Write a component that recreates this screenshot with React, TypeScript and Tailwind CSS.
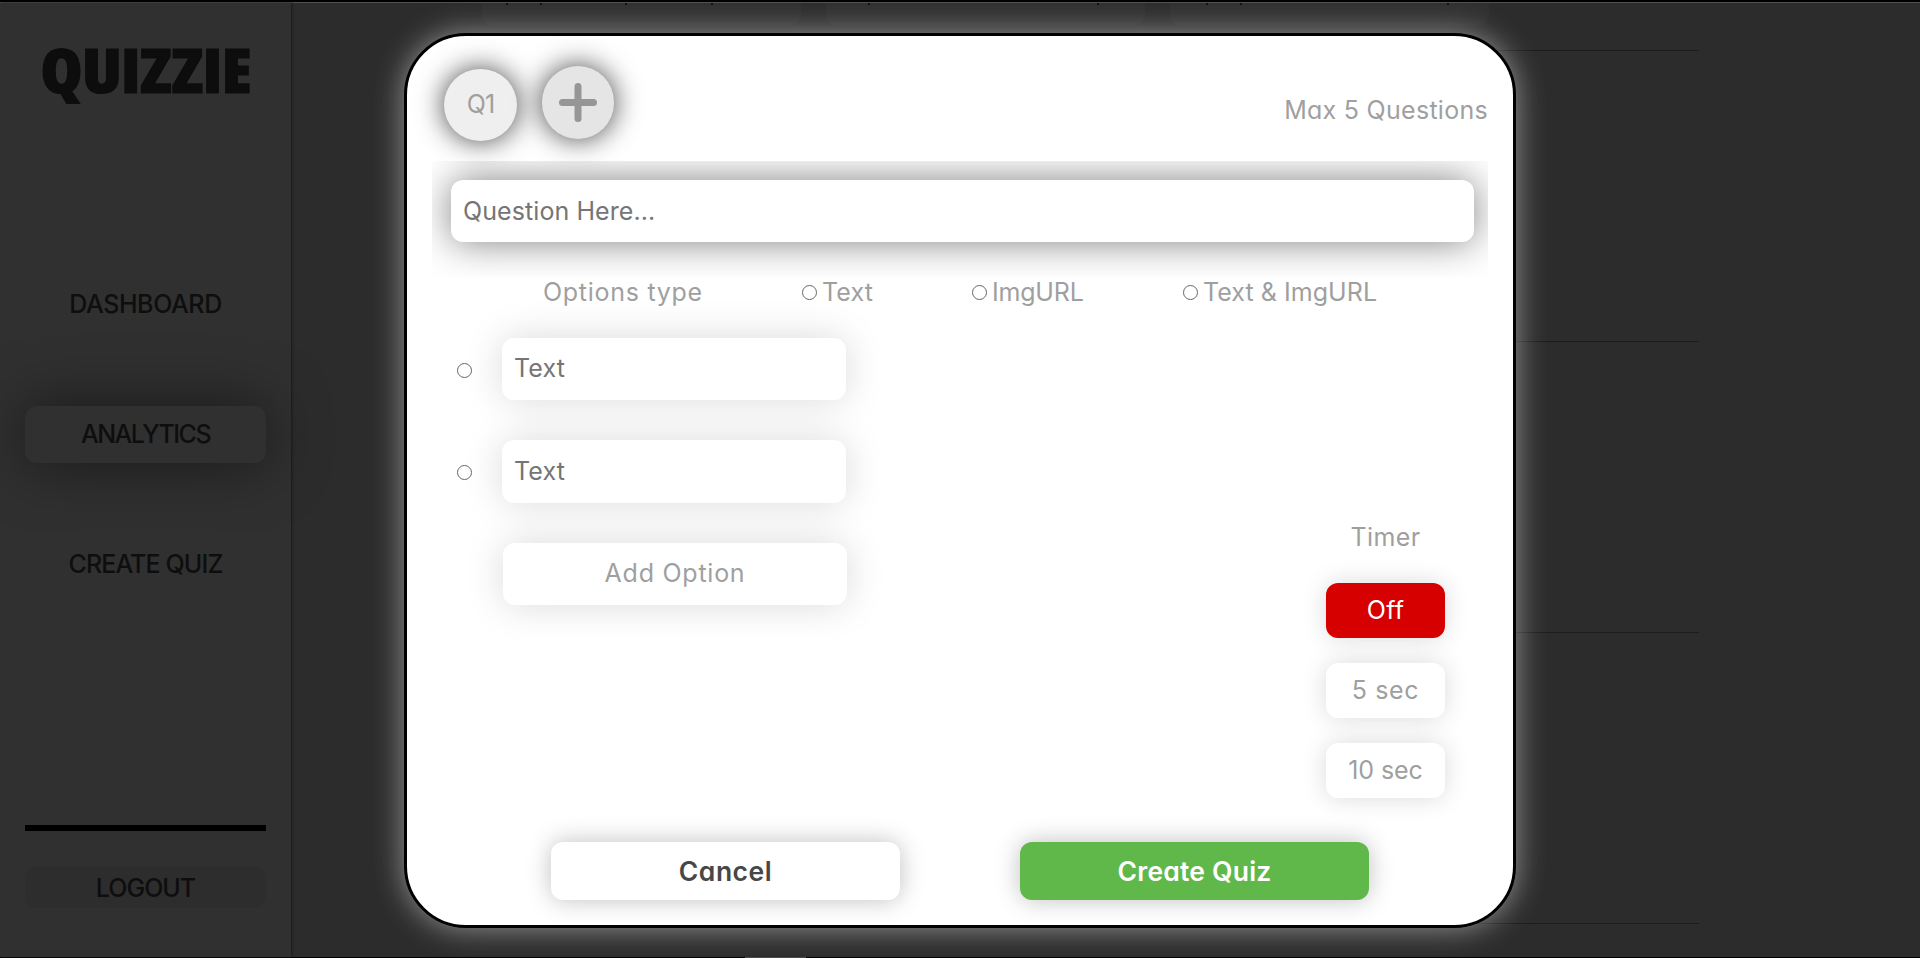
const navItem =
  "flex h-[57px] w-[241px] items-center justify-center rounded-xl text-[25px] font-medium text-[#0e0e0e]";

function Sidebar() {
  return (
    <aside className="relative z-10 flex h-[954px] w-[291px] shrink-0 flex-col items-center bg-[#303030] shadow-[1px_0_2px_#1a1a1a]">
      <h1 className="mt-[29px] h-[76px] origin-center scale-x-[1.1] whitespace-nowrap font-['Open_Sans',sans-serif] text-[61.5px] leading-[74px] font-extrabold tracking-[-0.5px] text-[#0d0d0d] [-webkit-text-stroke:1.2px_#0d0d0d] [font-stretch:75%]">
        QUIZZIE
      </h1>
      <nav className="mt-[168px] flex flex-col gap-[73px]">
        <a className={navItem}>
          <span className="tracking-[-0.39px]">DASHBOARD</span>
        </a>
        <a className={`${navItem} bg-[#303030] shadow-[0_0_60px_rgba(0,0,0,0.5)]`}>
          <span className="tracking-[-1.5px]">ANALYTICS</span>
        </a>
        <a className={navItem}>
          <span className="tracking-[-0.88px]">CREATE QUIZ</span>
        </a>
      </nav>
      <hr className="mt-[232px] h-1.5 w-[241px] border-0 bg-black" />
      <button className="mt-9 h-[41px] w-[241px] rounded-xl bg-[#2d2d2d] pt-0.5 text-[25px] font-medium tracking-[-0.99px] text-[#0e0e0e]">
        LOGOUT
      </button>
    </aside>
  );
}

const statCard = "flex h-[23px] w-[319px] rounded-b-xl bg-[#303030]";
const tick = "h-[2px] w-[2px] bg-[#111]";

function Analytics() {
  return (
    <main className="flex h-[954px] flex-1 flex-col bg-[#2c2c2c] pl-[191px]">
      <div className="flex gap-[25px]">
        <div className={statCard}>
          <i className={`${tick} ml-6`} />
          <i className={`${tick} ml-8`} />
          <i className={`${tick} ml-[83px]`} />
          <i className={`${tick} ml-[84px]`} />
        </div>
        <div className={statCard}>
          <i className={`${tick} ml-[42px]`} />
          <i className={`${tick} ml-[227px]`} />
        </div>
        <div className={statCard}>
          <i className={`${tick} ml-[36px]`} />
          <i className={`${tick} ml-8`} />
          <i className={`${tick} ml-[205px]`} />
        </div>
      </div>
      <div className="mt-6 flex w-[1217px] flex-col gap-[290px]">
        <div className="h-px bg-[#1c1c1c]" />
        <div className="h-px bg-[#1c1c1c]" />
        <div className="h-px bg-[#1c1c1c]" />
        <div className="h-px bg-[#1c1c1c]" />
      </div>
    </main>
  );
}

function Radio() {
  return (
    <input
      type="radio"
      className="size-[15px] shrink-0 appearance-none rounded-full border border-[#666666] bg-white"
    />
  );
}

const field =
  "w-[344px] rounded-xl bg-white px-3 pb-0.5 text-[25px] tracking-[0.15px] text-black shadow-[0_0_38px_rgba(0,0,0,0.15)] outline-none placeholder:text-[#757575]";
const timerButton =
  "h-[55px] w-[119px] rounded-xl pt-px text-[25px] shadow-[0_0_25px_rgba(0,0,0,0.15)]";

function CreateQuizModal() {
  return (
    <section className="h-[895px] w-[1112px] rounded-[62px] border-[3px] border-black bg-white px-[25px] text-[25px] text-[#9f9f9f] shadow-[0_0_30px_rgba(255,255,255,0.5)]">
      <header className="flex h-[125px] items-start">
        <button className="mt-[33px] ml-3 h-[72px] w-[73px] rounded-full bg-[#efefef] tracking-[-0.8px] shadow-[0_0_28px_rgba(0,0,0,0.75)]">
          Q1
        </button>
        <button className="mt-[30px] ml-[25px] flex h-[73px] w-[72px] items-center justify-center rounded-full bg-[#e5e5e5] shadow-[0_0_28px_rgba(0,0,0,0.75)]">
          <svg width="38" height="39" viewBox="0 0 38 39" stroke="#969696" strokeWidth="7" strokeLinecap="round">
            <path d="M19 3.5v32M3.5 19.5h31" />
          </svg>
        </button>
        <span className="mt-[59px] ml-auto h-[30px] leading-[30px] tracking-[0.28px]">Max 5 Questions</span>
      </header>

      <div className="relative h-[116px] overflow-hidden pt-[19px] pl-[19px]">
        <input
          placeholder="Question Here..."
          className="block h-[62px] w-[1023px] rounded-xl bg-white px-3 pb-px tracking-[0.08px] text-black shadow-[0_0_38px_rgba(0,0,0,0.5)] outline-none placeholder:text-[#757575]"
        />
      </div>

      <div className="flex h-[30px] items-center pl-[111px]">
        <span className="w-[259px] pt-px tracking-[0.72px]">Options type</span>
        <label className="flex w-[170px] items-center gap-[5px] tracking-[0.1px]">
          <Radio />
          <span className="pt-0.5">Text</span>
        </label>
        <label className="flex w-[211px] items-center gap-[5px] tracking-[-0.2px]">
          <Radio />
          <span className="pt-0.5">ImgURL</span>
        </label>
        <label className="flex items-center gap-[5px] tracking-[0.05px]">
          <Radio />
          <span className="pt-0.5">Text &amp; ImgURL</span>
        </label>
      </div>

      <div className="flex h-[535px] justify-between pr-[43px] pl-[25px]">
        <div className="flex flex-col gap-10 pt-[31px]">
          <div className="flex items-center gap-[30px] [&>input:first-child]:mt-0.5">
            <Radio />
            <input placeholder="Text" className={`${field} h-[62px]`} />
          </div>
          <div className="flex items-center gap-[30px] [&>input:first-child]:mt-0.5">
            <Radio />
            <input placeholder="Text" className={`${field} h-[63px]`} />
          </div>
          <button className="ml-[46px] h-[62px] w-[344px] rounded-xl bg-white pb-px tracking-[0.75px] shadow-[0_0_38px_rgba(0,0,0,0.15)]">
            Add Option
          </button>
        </div>
        <div className="flex flex-col items-center gap-[25px] pt-[215px]">
          <span className="mb-[6px] h-[30px] leading-[30px] tracking-[0.4px]">Timer</span>
          <button className={`${timerButton} bg-[#d60000] tracking-[0.3px] text-white`}>Off</button>
          <button className={`${timerButton} bg-white tracking-[0.6px]`}>5 sec</button>
          <button className={`${timerButton} bg-white tracking-[-0.1px]`}>10 sec</button>
        </div>
      </div>

      <footer className="flex gap-[120px] pl-[119px] text-[26.5px]">
        <button className="h-[58px] w-[349px] rounded-xl bg-white pt-px font-semibold tracking-[0.5px] text-[#474747] shadow-[0_0_25px_rgba(0,0,0,0.25)]">
          Cancel
        </button>
        <button className="h-[58px] w-[349px] rounded-xl bg-[#60b84b] pt-px font-semibold tracking-[0.2px] text-white shadow-[0_0_25px_rgba(0,0,0,0.25)]">
          Create Quiz
        </button>
      </footer>
    </section>
  );
}

export default function App() {
  return (
    <div className="relative h-[958px] w-[1920px] overflow-hidden bg-black pt-[2px] font-['Inter',sans-serif] [font-feature-settings:'cv11']">
      <div className="h-px bg-[#505050]" />
      <div className="flex">
        <Sidebar />
        <Analytics />
      </div>
      <div className="flex h-px pl-[745px]">
        <div className="w-[61px] bg-[#4a4a4a]" />
      </div>
      <div className="absolute inset-0 z-20 flex justify-center pt-[33px]">
        <CreateQuizModal />
      </div>
    </div>
  );
}
